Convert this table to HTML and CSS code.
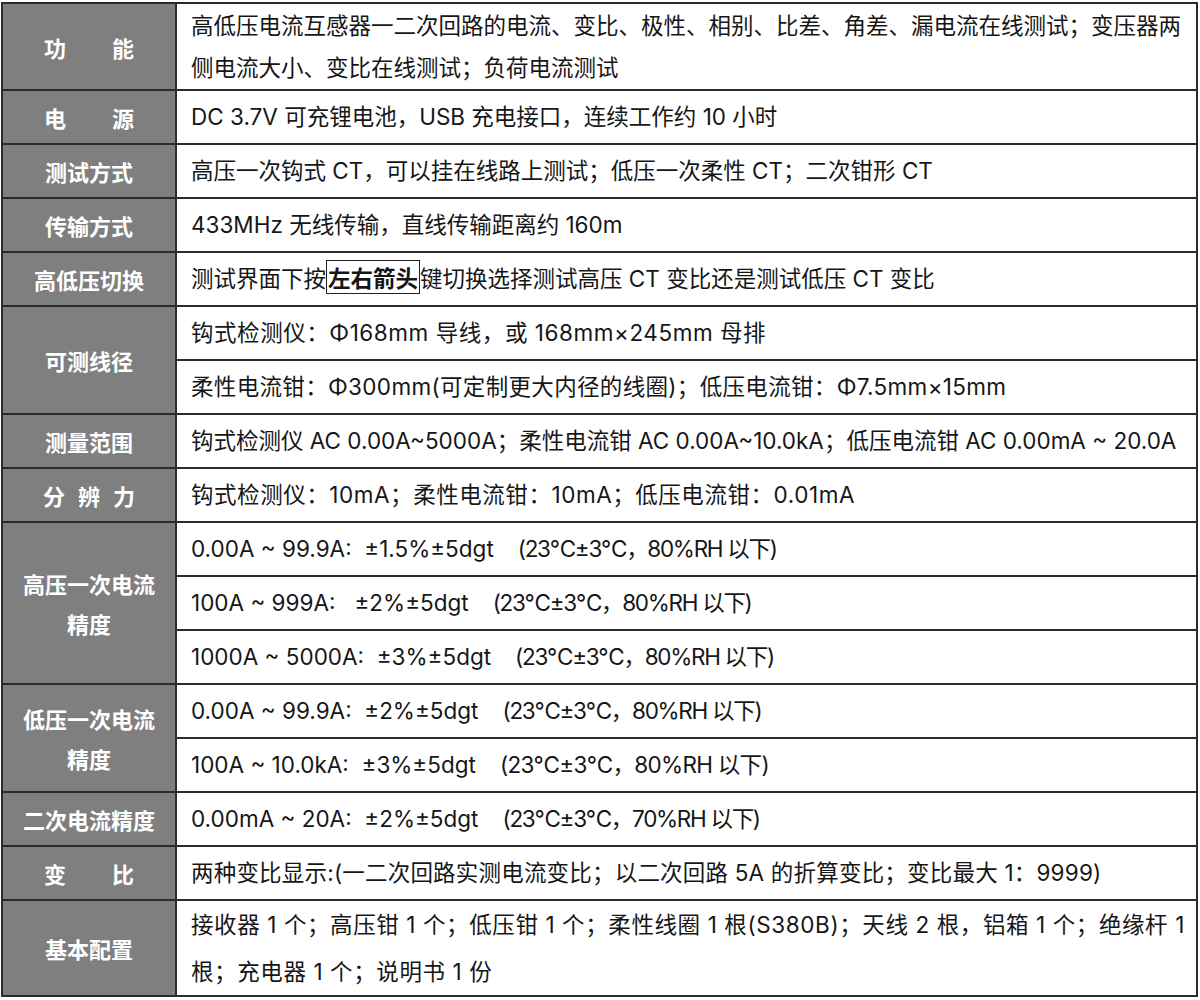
FILE: index.html
```html
<!DOCTYPE html>
<html lang="zh-CN">
<head>
<meta charset="utf-8">
<title>参数表</title>
<link rel="stylesheet" href="styles.css">
</head>
<body>
<div class="wrap">
<table class="spec">
<colgroup><col class="c-label"><col class="c-value"></colgroup>
<tbody>
<tr><th class="lbl"><span class="sp48">功能</span></th><td class="val two">高低压电流互感器一二次回路的电流、变比、极性、相别、比差、角差、漏电流在线测试；变压器两<br>侧电流大小、变比在线测试；负荷电流测试</td></tr>
<tr><th class="lbl"><span class="sp48">电源</span></th><td class="val">DC 3.7V 可充锂电池，USB 充电接口，连续工作约 10 小时</td></tr>
<tr><th class="lbl">测试方式</th><td class="val">高压一次钩式 CT，可以挂在线路上测试；低压一次柔性 CT；二次钳形 CT</td></tr>
<tr><th class="lbl">传输方式</th><td class="val">433MHz 无线传输，直线传输距离约 160m</td></tr>
<tr><th class="lbl">高低压切换</th><td class="val">测试界面下按<b class="key">左右箭头</b>键切换选择测试高压 CT 变比还是测试低压 CT 变比</td></tr>
<tr><th class="lbl" rowspan="2">可测线径</th><td class="val ls6">钩式检测仪：Φ168mm 导线，或 168mm×245mm 母排</td></tr>
<tr><td class="val ls3">柔性电流钳：Φ300mm(可定制更大内径的线圈)；低压电流钳：Φ7.5mm×15mm</td></tr>
<tr><th class="lbl">测量范围</th><td class="val">钩式检测仪 AC 0.00A~5000A；柔性电流钳 AC 0.00A~10.0kA；低压电流钳 AC 0.00mA ~ 20.0A</td></tr>
<tr><th class="lbl"><span class="sp14">分辨力</span></th><td class="val ls6">钩式检测仪：10mA；柔性电流钳：10mA；低压电流钳：0.01mA</td></tr>
<tr><th class="lbl ml" rowspan="3">高压一次电流<br>精度</th><td class="val">0.00A ~ 99.9A:  ±1.5%±5dgt<span class="cond">(23℃±3℃，80%RH 以下)</span></td></tr>
<tr><td class="val">100A ~ 999A:   ±2%±5dgt<span class="cond">(23℃±3℃，80%RH 以下)</span></td></tr>
<tr><td class="val">1000A ~ 5000A:  ±3%±5dgt<span class="cond">(23℃±3℃，80%RH 以下)</span></td></tr>
<tr><th class="lbl ml" rowspan="2">低压一次电流<br>精度</th><td class="val">0.00A ~ 99.9A:  ±2%±5dgt<span class="cond">(23℃±3℃，80%RH 以下)</span></td></tr>
<tr><td class="val">100A ~ 10.0kA:  ±3%±5dgt<span class="cond c2">(23℃±3℃，80%RH 以下)</span></td></tr>
<tr><th class="lbl">二次电流精度</th><td class="val">0.00mA ~ 20A:  ±2%±5dgt<span class="cond">(23℃±3℃，70%RH 以下)</span></td></tr>
<tr><th class="lbl"><span class="sp48">变比</span></th><td class="val ls2">两种变比显示:(一二次回路实测电流变比；以二次回路 5A 的折算变比；变比最大 1：9999)</td></tr>
<tr><th class="lbl">基本配置</th><td class="val two-b">接收器 1 个；高压钳 1 个；低压钳 1 个；柔性线圈 1 根(S380B)；天线 2 根，铝箱 1 个；绝缘杆 1<br>根；充电器 1 个；说明书 1 份</td></tr>
</tbody>
</table>
</div>
</body>
</html>
```
FILE: styles.css
```css
html, body {
  margin: 0;
  padding: 0;
  background: #ffffff;
}

.wrap {
  padding: 2px 0 0 1px;
}

.spec {
  border-collapse: collapse;
  width: 1197px;
  table-layout: fixed;
  font-family: "Inter", "Noto Sans CJK SC", sans-serif;
  font-size: 22.5px;
  color: #161616;
}

.c-label { width: 174px; }

.spec th,
.spec td {
  border: 2px solid #2b2b2b;
  padding: 0;
}

.lbl {
  background: #7f7f7f;
  color: #ffffff;
  font-family: "Noto Sans CJK SC", sans-serif;
  font-size: 22px;
  font-weight: 700;
  text-align: center;
  vertical-align: middle;
  line-height: 52px;
  white-space: nowrap;
}

.lbl.ml {
  line-height: 40px;
}

.sp48 {
  display: inline-block;
  letter-spacing: 46px;
  margin-right: -46px;
}

.sp14 {
  display: inline-block;
  letter-spacing: 13px;
  margin-right: -13px;
}

.val {
  text-align: left;
  padding: 0 6px 0 14px !important;
  line-height: 52px;
  white-space: pre;
  vertical-align: middle;
}

.val.ls6 { letter-spacing: 0.55px; }
.val.ls3 { letter-spacing: 0.33px; }
.val.ls2 { letter-spacing: 0.2px; }

.val.two {
  line-height: 42px;
  padding-top: 1px !important;
}

.val.two-b {
  line-height: 47px;
  letter-spacing: 0.6px;
}

.cond {
  margin-left: 24px;
  letter-spacing: -1.3px;
}

.cond.c2 {
  letter-spacing: -0.7px;
}

.key {
  font-family: "Noto Sans CJK SC", sans-serif;
  font-weight: 700;
  border: 1px solid #222222;
  padding: 0 1px;
  line-height: 32px;
  display: inline-block;
}
```
